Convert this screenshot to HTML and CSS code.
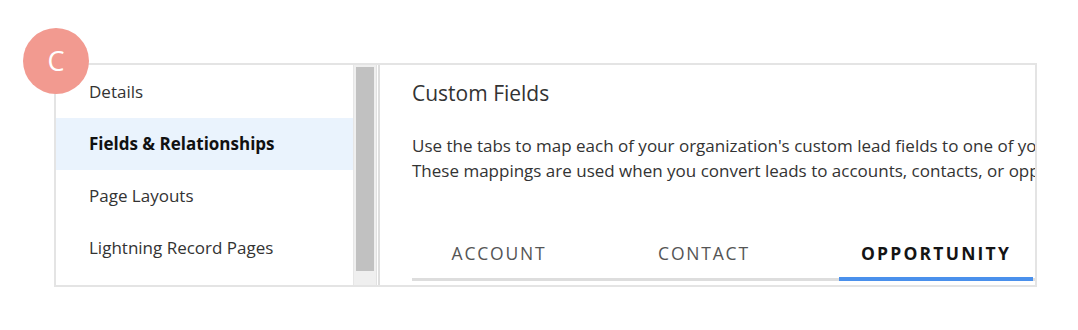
FILE: index.html
```html
<!DOCTYPE html>
<html lang="en">
<head>
  <meta charset="UTF-8" />
  <title>Object Manager - Custom Fields</title>
  <link rel="stylesheet" href="styles.css">
</head>
<body>
  <div class="stage">
    <div class="badge">C</div>

    <div class="frame">
      <div class="side">
        <ul class="menu">
          <li>Details</li>
          <li class="active">Fields &amp; Relationships</li>
          <li>Page Layouts</li>
          <li>Lightning Record Pages</li>
        </ul>
        <div class="scrollbar"><div class="thumb"></div></div>
      </div>

      <div class="main">
        <h2>Custom Fields</h2>
        <p class="desc">
          <span>Use the tabs to map each of your organization's custom lead fields to one of your organization's custom account, contact, or opportunity fields.</span>
          <span>These mappings are used when you convert leads to accounts, contacts, or opportunities.</span>
        </p>
        <div class="tabs">
          <div class="tab tab-account">ACCOUNT</div>
          <div class="tab tab-contact">CONTACT</div>
          <div class="tab tab-opp selected">OPPORTUNITY</div>
        </div>
      </div>
    </div>
  </div>
</body>
</html>
```

FILE: styles.css
```css
body {
  margin: 0;
  background: #fff;
  font-family: 'Open Sans', 'Noto Sans', sans-serif;
  color: #2b2b2b;
}
.stage {
  position: relative;
  padding: 63px 0 0 54px;
}
.badge {
  position: absolute;
  left: 23px;
  top: 28px;
  width: 66px;
  height: 66px;
  border-radius: 50%;
  background: #f29a90;
  color: #fff;
  font-size: 27px;
  line-height: 66px;
  text-align: center;
  z-index: 2;
}
.frame {
  display: flex;
  width: 979px;
  height: 220px;
  border: 2px solid #e4e4e4;
  overflow: hidden;
}
.side {
  display: flex;
  width: 322px;
  flex: none;
  border-right: 2px solid #dedede;
}
.menu {
  list-style: none;
  margin: 0;
  padding: 1px 0 0;
  width: 297px;
}
.menu li {
  height: 52px;
  line-height: 52px;
  padding-left: 33px;
  font-size: 17px;
  color: #333;
  white-space: nowrap;
}
.menu li.active {
  background: #eaf3fd;
  font-weight: 700;
  color: #111;
}
.scrollbar {
  width: 24px;
  background: #efefef;
  border-left: 1px solid #e6e6e6;
  border-right: 1px solid #e2e2e2;
  padding: 2px 2px 0;
  box-sizing: border-box;
}
.thumb {
  height: 204px;
  background: #c1c1c1;
}
.main {
  flex: 1;
  min-width: 0;
  padding: 0 0 0 32px;
  overflow: hidden;
}
.main h2 {
  margin: 14px 0 0;
  font-size: 21px;
  font-weight: 400;
  line-height: 28px;
  color: #333;
  white-space: nowrap;
}
.desc {
  margin: 26px 0 0;
  font-size: 17px;
  line-height: 25px;
  color: #333;
  white-space: nowrap;
}
.desc span {
  display: block;
}
.tabs {
  display: flex;
  gap: 67px;
  margin-top: 52px;
  padding-left: 17px;
  width: 621px;
  height: 43px;
  box-sizing: content-box;
  border-bottom: 3px solid #dddddd;
}
.tab {
  height: 46px;
  line-height: 36px;
  text-align: center;
  font-size: 17.5px;
  letter-spacing: 1.8px;
  color: #555;
  flex: none;
  border-bottom: 4px solid transparent;
  box-sizing: border-box;
}
.tab-account { width: 140px; }
.tab-contact { width: 136px; }
.tab-opp { width: 194px; }
.tab.selected {
  color: #141414;
  font-weight: 700;
  letter-spacing: 2.2px;
  border-bottom-color: #4a90ec;
}
```
